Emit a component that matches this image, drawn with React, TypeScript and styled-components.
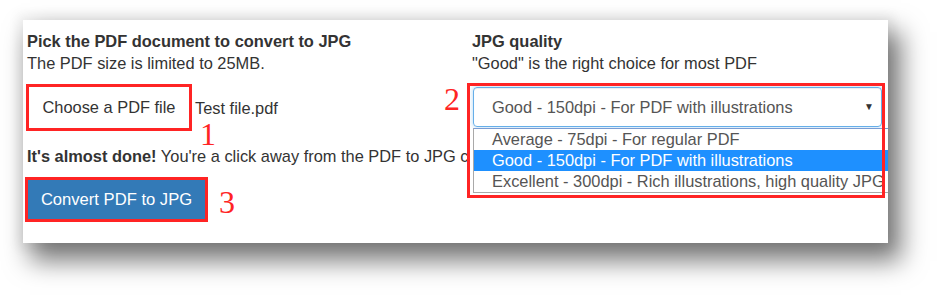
import React from 'react';
import styled, { createGlobalStyle } from 'styled-components';

const GlobalStyle = createGlobalStyle`
  html, body {
    margin: 0;
    padding: 0;
    background: #ffffff;
  }
  body {
    font-family: "Liberation Sans", Arial, sans-serif;
    color: #333333;
  }
`;

const Stage = styled.div`
  width: 942px;
  height: 295px;
  padding: 20px 0 0 23px;
  box-sizing: border-box;
  background: #ffffff;
  overflow: hidden;
`;

const Card = styled.div`
  width: 865px;
  height: 223px;
  background: #ffffff;
  overflow: hidden;
  box-shadow: 0 0 10px 6px rgba(0, 0, 0, 0.05), 10px 15px 24px 3px rgba(0, 0, 0, 0.52);
  display: grid;
  grid-template-columns: 444px 1fr;
  font-size: 16.4px;
  line-height: 22px;
`;

const Column = styled.div<{ $front?: boolean }>`
  position: relative;
  z-index: ${p => (p.$front ? 1 : 0)};
  padding-top: 10px;
  padding-left: ${p => (p.$front ? '0' : '4px')};
  white-space: nowrap;
`;

const Title = styled.div<{ $indent?: number }>`
  font-weight: bold;
  margin-left: ${p => p.$indent || 0}px;
`;

const Hint = styled.div<{ $indent?: number }>`
  margin-left: ${p => p.$indent || 0}px;
`;

const FileRow = styled.div`
  position: relative;
  display: flex;
  align-items: center;
  margin-top: 10px;
  margin-left: -1px;
`;

const Marked = styled.div`
  border: 3px solid #ff2424;
`;

const ChooseButton = styled.button`
  display: block;
  width: 160px;
  height: 41px;
  border: 0;
  background: #ffffff;
  color: #333333;
  font-family: "Liberation Sans", Arial, sans-serif;
  font-size: 16.4px;
  padding: 0;
`;

const FileName = styled.span`
  margin-left: 3px;
`;

const Numeral = styled.span<{ $x: number; $y: number }>`
  position: absolute;
  left: ${p => p.$x}px;
  top: ${p => p.$y}px;
  font-family: "Liberation Serif", "Times New Roman", serif;
  font-size: 32px;
  line-height: 24px;
  color: #ff2424;
`;

const Notice = styled.div`
  margin-top: 14px;
`;

const ConvertRow = styled.div`
  position: relative;
  margin-top: 10px;
  margin-left: -2px;
  width: 183px;
`;

const ConvertButton = styled.button`
  display: block;
  width: 177px;
  height: 39px;
  border: 0;
  background: #337ab7;
  color: #ffffff;
  font-family: "Liberation Sans", Arial, sans-serif;
  font-size: 16.6px;
  padding: 0;
`;

const QualityBox = styled.div`
  position: relative;
  margin-top: 9px;
  width: 418px;
  height: 115px;
  box-sizing: border-box;
  padding: 4px 0 0 6px;
  background: #ffffff;

  &::after {
    content: '';
    position: absolute;
    inset: 0;
    border: 3px solid #ff2424;
    pointer-events: none;
  }
`;

const Select = styled.div`
  display: flex;
  align-items: center;
  justify-content: space-between;
  width: 409px;
  height: 40px;
  box-sizing: border-box;
  padding: 0 7px 0 18px;
  border: 1px solid #66afe9;
  border-radius: 4px;
  box-shadow: inset 0 1px 1px rgba(0, 0, 0, 0.07), 0 0 4px rgba(102, 175, 233, 0.5);
  color: #555555;
`;

const Arrow = styled.span`
  font-size: 10px;
  color: #333333;
`;

const OptionList = styled.div`
  width: 430px;
  border: 1px solid #a9a9a9;
  border-top-color: #7a9cd3;
  margin-top: 1px;
`;

const Option = styled.div<{ $selected?: boolean }>`
  height: 21px;
  line-height: 21px;
  padding-left: 18px;
  background: ${p => (p.$selected ? '#1e90ff' : '#ffffff')};
  color: ${p => (p.$selected ? '#ffffff' : '#555555')};
`;

const App: React.FC = () => {
  return (
    <>
      <GlobalStyle />
      <Stage>
        <Card>
          <Column>
            <Title>Pick the PDF document to convert to JPG</Title>
            <Hint>The PDF size is limited to 25MB.</Hint>
            <FileRow>
              <Marked>
                <ChooseButton>Choose a PDF file</ChooseButton>
              </Marked>
              <FileName>Test file.pdf</FileName>
              <Numeral $x={174} $y={38}>1</Numeral>
            </FileRow>
            <Notice>
              <b>It's almost done!</b> You're a click away from the PDF to JPG converter
            </Notice>
            <ConvertRow>
              <Marked>
                <ConvertButton>Convert PDF to JPG</ConvertButton>
              </Marked>
              <Numeral $x={194} $y={13}>3</Numeral>
            </ConvertRow>
          </Column>
          <Column $front>
            <Title $indent={5}>JPG quality</Title>
            <Hint $indent={5}>"Good" is the right choice for most PDF</Hint>
            <QualityBox>
              <Numeral $x={-23} $y={4}>2</Numeral>
              <Select>
                <span>Good - 150dpi - For PDF with illustrations</span>
                <Arrow>▼</Arrow>
              </Select>
              <OptionList>
                <Option>Average - 75dpi - For regular PDF</Option>
                <Option $selected>Good - 150dpi - For PDF with illustrations</Option>
                <Option>Excellent - 300dpi - Rich illustrations, high quality JPG</Option>
              </OptionList>
            </QualityBox>
          </Column>
        </Card>
      </Stage>
    </>
  );
};

export default App;
